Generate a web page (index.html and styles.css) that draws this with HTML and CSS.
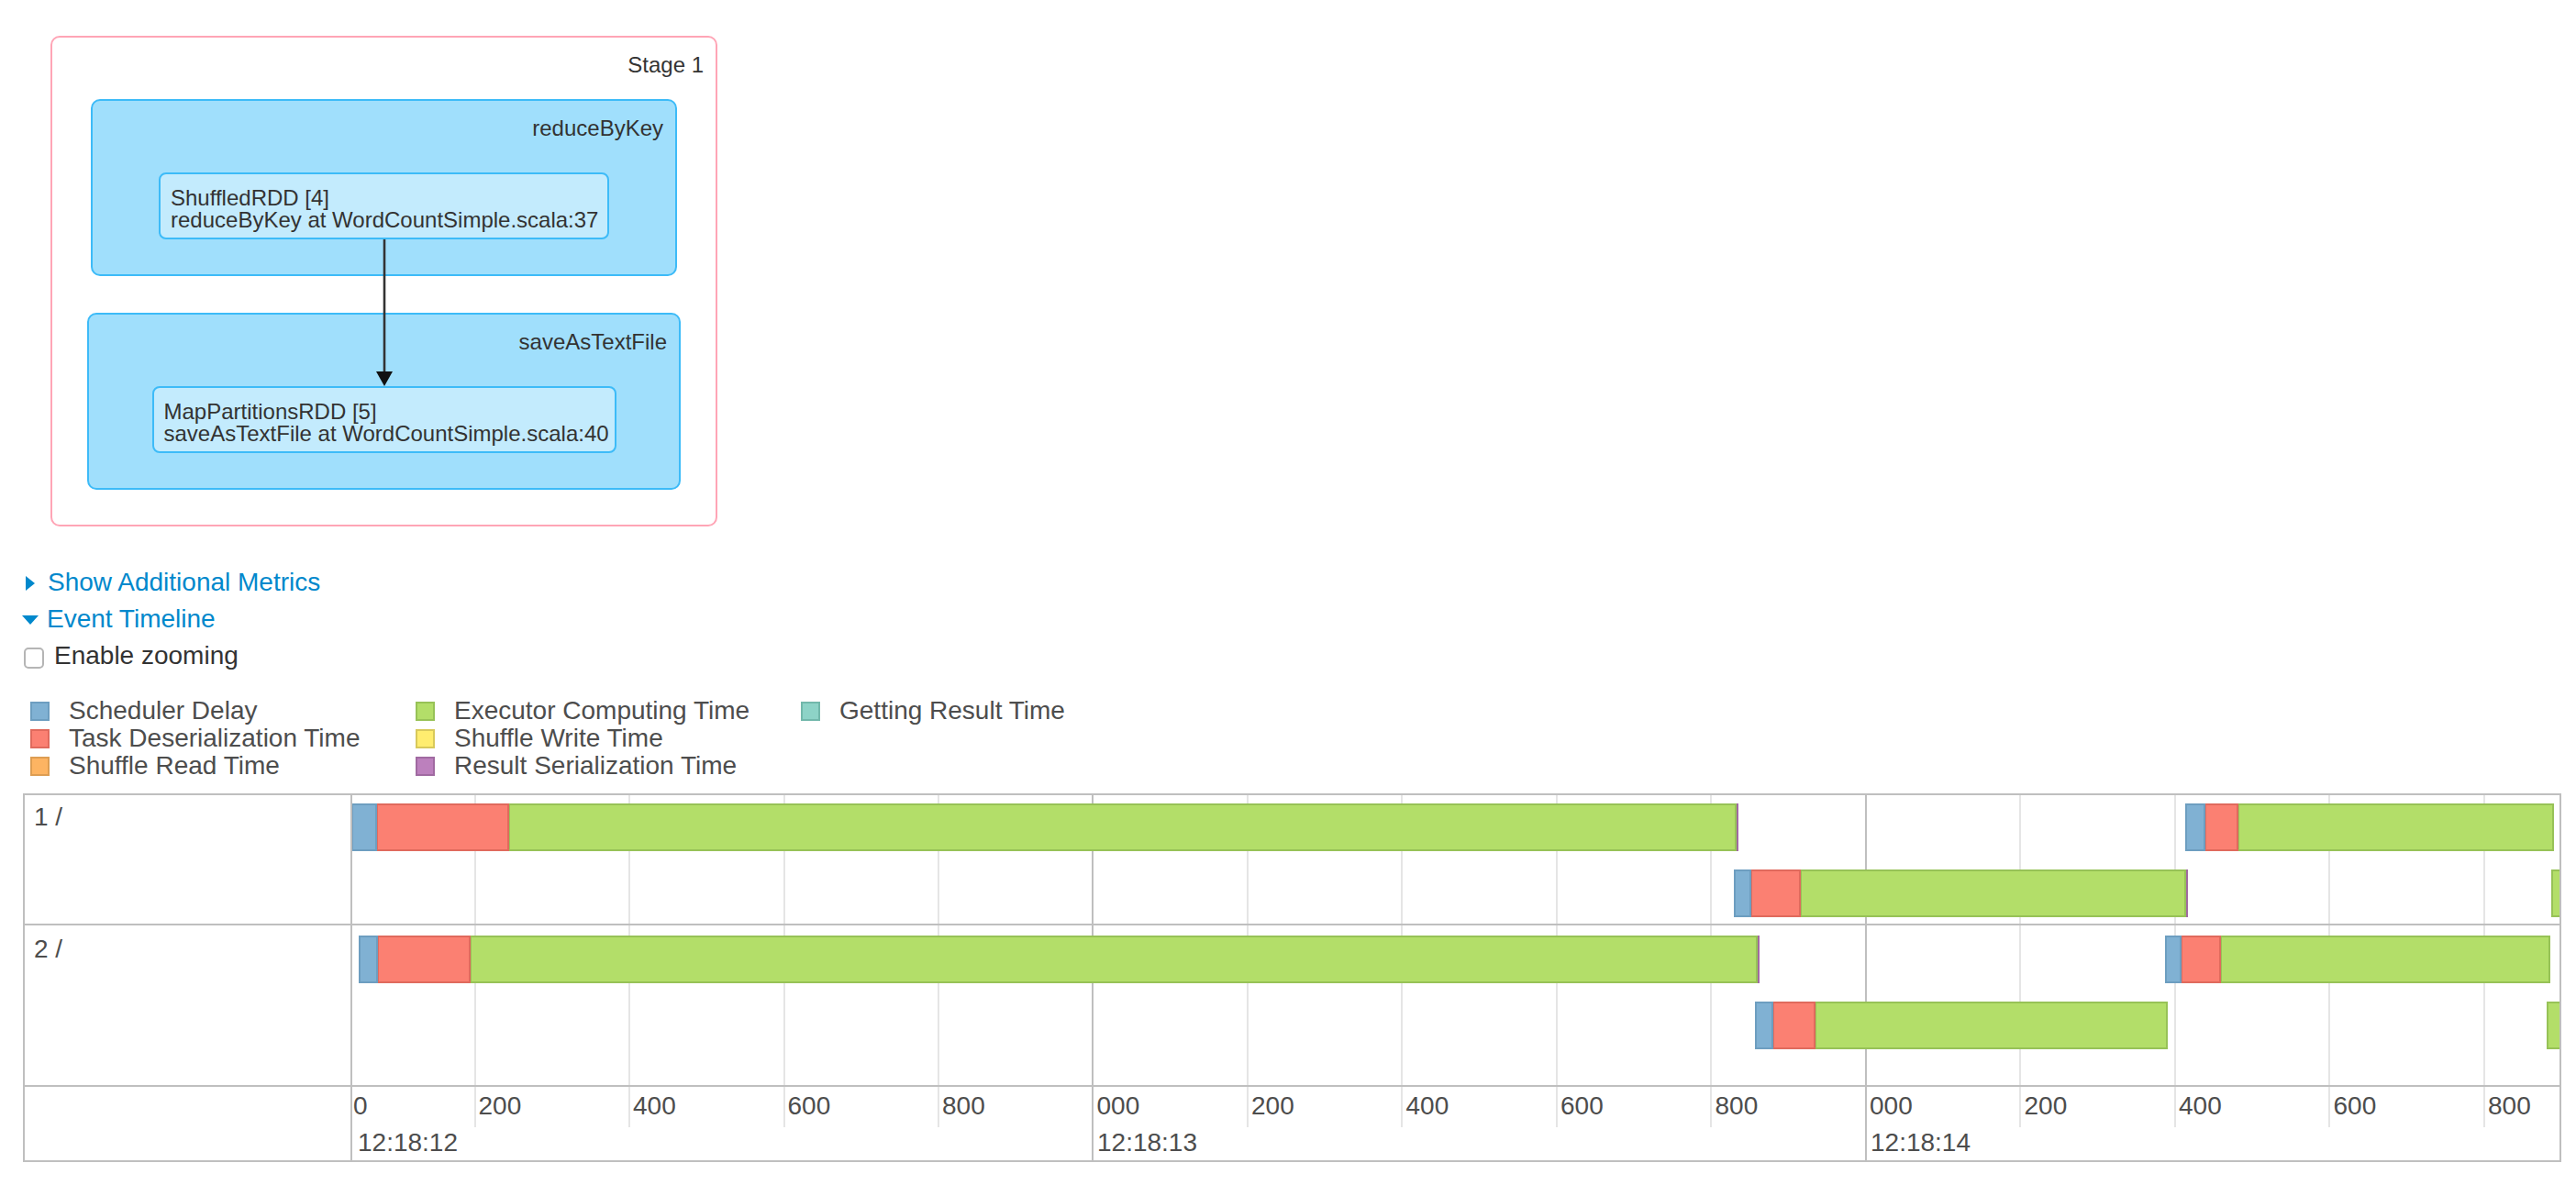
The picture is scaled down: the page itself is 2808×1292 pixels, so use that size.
FILE: index.html
```html
<!DOCTYPE html>
<html>
<head>
<meta charset="utf-8">
<title>Stage 1</title>
<link rel="stylesheet" href="styles.css">
</head>
<body>
<div class="page">
  <div class="stage">
    <div class="stage-title">Stage 1</div>
    <div class="cluster cluster-a">
      <div class="cluster-label">reduceByKey</div>
      <div class="node node-a">ShuffledRDD [4]<br>reduceByKey at WordCountSimple.scala:37</div>
    </div>
    <div class="cluster cluster-b">
      <div class="cluster-label">saveAsTextFile</div>
      <div class="node node-b">MapPartitionsRDD [5]<br>saveAsTextFile at WordCountSimple.scala:40</div>
    </div>
    <svg class="edge" width="20" height="161" viewBox="0 0 20 161">
      <line x1="10" y1="0" x2="10" y2="146" stroke="#333" stroke-width="2.6"/>
      <polygon points="1,144 19,144 10,160" fill="#111"/>
    </svg>
  </div>

  <div class="toggles">
    <div class="toggle"><span class="tri-right"></span><span>Show Additional Metrics</span></div>
    <div class="toggle"><span class="tri-down"></span><span>Event Timeline</span></div>
    <div class="check-row"><span class="checkbox"></span><span>Enable zooming</span></div>
  </div>

  <div class="legend">
    <div class="legend-item"><span class="sw sd"></span>Scheduler Delay</div>
    <div class="legend-item"><span class="sw td"></span>Task Deserialization Time</div>
    <div class="legend-item"><span class="sw sr"></span>Shuffle Read Time</div>
    <div class="legend-item"><span class="sw ec"></span>Executor Computing Time</div>
    <div class="legend-item"><span class="sw sw-w"></span>Shuffle Write Time</div>
    <div class="legend-item"><span class="sw rs"></span>Result Serialization Time</div>
    <div class="legend-item"><span class="sw gr"></span>Getting Result Time</div>
  </div>

  <div class="timeline">
    <div class="tl-label tl-label-1">1 /</div>
    <div class="tl-label tl-label-2">2 /</div>
    <div class="tl-label tl-label-axis"></div>

    <div class="tl-grid">
      <div class="gl" style="left:132.5px"></div>
      <div class="gl" style="left:301px"></div>
      <div class="gl" style="left:469.5px"></div>
      <div class="gl" style="left:638px"></div>
      <div class="gl major" style="left:806px"></div>
      <div class="gl" style="left:974.5px"></div>
      <div class="gl" style="left:1143px"></div>
      <div class="gl" style="left:1311.5px"></div>
      <div class="gl" style="left:1480px"></div>
      <div class="gl major" style="left:1648.5px"></div>
      <div class="gl" style="left:1817px"></div>
      <div class="gl" style="left:1985.5px"></div>
      <div class="gl" style="left:2154px"></div>
      <div class="gl" style="left:2322.5px"></div>
    </div>

    <div class="tl-row tl-row-1">
      <div class="bar" style="left:-1px;top:9px"><div class="seg sd" style="width:28px"></div><div class="seg td" style="width:144px"></div><div class="seg ec" style="width:1338px"></div><div class="seg rs" style="width:2px"></div></div>
      <div class="bar" style="left:1998px;top:9px"><div class="seg sd" style="width:22px"></div><div class="seg td" style="width:36px"></div><div class="seg ec" style="width:344px"></div></div>
      <div class="bar" style="left:1506px;top:81px"><div class="seg sd" style="width:19px"></div><div class="seg td" style="width:54px"></div><div class="seg ec" style="width:420px"></div><div class="seg rs" style="width:2px"></div></div>
      <div class="bar" style="left:2397px;top:81px"><div class="seg ec" style="width:40px"></div></div>
    </div>

    <div class="tl-row tl-row-2">
      <div class="bar" style="left:7px;top:11px"><div class="seg sd" style="width:21px"></div><div class="seg td" style="width:101px"></div><div class="seg ec" style="width:1403px"></div><div class="seg rs" style="width:2px"></div></div>
      <div class="bar" style="left:1976px;top:11px"><div class="seg sd" style="width:18px"></div><div class="seg td" style="width:43px"></div><div class="seg ec" style="width:359px"></div></div>
      <div class="bar" style="left:1529px;top:83px"><div class="seg sd" style="width:20px"></div><div class="seg td" style="width:46px"></div><div class="seg ec" style="width:384px"></div></div>
      <div class="bar" style="left:2392px;top:83px"><div class="seg ec" style="width:40px"></div></div>
    </div>

    <div class="tl-axis">
      <span class="minor-lbl" style="left:1px">0</span>
      <span class="minor-lbl" style="left:137.5px">200</span>
      <span class="minor-lbl" style="left:306px">400</span>
      <span class="minor-lbl" style="left:474.5px">600</span>
      <span class="minor-lbl" style="left:643px">800</span>
      <span class="minor-lbl" style="left:811.5px">000</span>
      <span class="minor-lbl" style="left:980px">200</span>
      <span class="minor-lbl" style="left:1148.5px">400</span>
      <span class="minor-lbl" style="left:1317px">600</span>
      <span class="minor-lbl" style="left:1485.5px">800</span>
      <span class="minor-lbl" style="left:1654px">000</span>
      <span class="minor-lbl" style="left:1822.5px">200</span>
      <span class="minor-lbl" style="left:1991px">400</span>
      <span class="minor-lbl" style="left:2159.5px">600</span>
      <span class="minor-lbl" style="left:2328px">800</span>
      <span class="major-lbl" style="left:6px">12:18:12</span>
      <span class="major-lbl" style="left:812px">12:18:13</span>
      <span class="major-lbl" style="left:1655px">12:18:14</span>
    </div>
  </div>
</div>
</body>
</html>
```

FILE: styles.css
```css
html, body {
  margin: 0;
  padding: 0;
  background: #fff;
}

body {
  font-family: "Liberation Sans", Arial, Helvetica, sans-serif;
  font-size: 28px;
  color: #333;
}

.page {
  padding-top: 39px;
  width: 2808px;
}

/* ---------- DAG ---------- */
.stage {
  position: relative;
  margin-left: 55px;
  width: 727px;
  height: 535px;
  box-sizing: border-box;
  border: 2px solid #ffa5b6;
  border-radius: 10px;
  display: flex;
  flex-direction: column;
  align-items: center;
  font-size: 24px;
  color: #333;
}

.stage-title {
  align-self: flex-end;
  margin: 16px 13px 0 0;
  line-height: 28px;
}

.cluster {
  box-sizing: border-box;
  height: 193px;
  border: 2px solid #3dbbf8;
  border-radius: 10px;
  background: #a0dffc;
  display: flex;
  flex-direction: column;
  align-items: center;
}

.cluster-a {
  width: 639px;
  margin-top: 23px;
}

.cluster-b {
  width: 647px;
  margin-top: 40px;
}

.cluster-label {
  align-self: flex-end;
  margin: 16px 13px 0 0;
  line-height: 28px;
}

.node {
  box-sizing: border-box;
  height: 73px;
  margin-top: 34px;
  padding: 14px 10px 0 11px;
  border: 2px solid #3dbbf8;
  border-radius: 8px;
  background: #c3ebfd;
  line-height: 23.5px;
  white-space: nowrap;
}

.node-a { width: 491px; }
.node-b { width: 506px; }

.edge {
  position: absolute;
  left: 351.5px;
  top: 220px;
}

/* ---------- toggles ---------- */
.toggles {
  margin-top: 41px;
}

.toggle {
  display: flex;
  align-items: center;
  height: 40px;
  color: #0088cc;
}

.tri-right {
  width: 0;
  height: 0;
  border-top: 8.5px solid transparent;
  border-bottom: 8.5px solid transparent;
  border-left: 10px solid #0088cc;
  margin: 2px 14px 0 28px;
}

.tri-down {
  width: 0;
  height: 0;
  border-left: 9.5px solid transparent;
  border-right: 9.5px solid transparent;
  border-top: 10px solid #0088cc;
  margin: 2px 9px 0 24px;
}

.check-row {
  display: flex;
  align-items: center;
  height: 40px;
  color: #333;
}

.checkbox {
  box-sizing: border-box;
  width: 22px;
  height: 23px;
  margin: 4px 11px 0 26px;
  border: 2px solid #b5b5b5;
  border-radius: 5px;
  background: #fff;
}

/* ---------- legend ---------- */
.legend {
  margin: 25px 0 0 33px;
  display: grid;
  grid-auto-flow: column;
  grid-template-rows: repeat(3, 30px);
  grid-template-columns: repeat(3, 420px);
  color: #4d4d4d;
  line-height: 30px;
}

.legend-item {
  display: flex;
  align-items: center;
  white-space: nowrap;
}

.sw {
  box-sizing: border-box;
  width: 21px;
  height: 21px;
  margin-right: 21px;
  border-width: 2px;
  border-style: solid;
}

/* ---------- timeline ---------- */
.timeline {
  position: relative;
  margin: 15px 0 0 25px;
  width: 2767px;
  box-sizing: border-box;
  border: 2px solid #bfbfbf;
  display: grid;
  grid-template-columns: 357px 1fr;
  grid-template-rows: 142px 176px 80px;
  color: #4d4d4d;
}

.tl-label {
  box-sizing: border-box;
  grid-column: 1;
  border-right: 2px solid #bfbfbf;
  border-bottom: 2px solid #bfbfbf;
  padding-left: 10px;
  line-height: 32px;
}

.tl-label-1 { grid-row: 1; padding-top: 8px; }
.tl-label-2 { grid-row: 2; padding-top: 10px; }
.tl-label-axis { grid-row: 3; border-bottom: 0; }

.tl-grid {
  position: absolute;
  left: 357px;
  top: 0;
  right: 0;
  bottom: 0;
  overflow: hidden;
}

.gl {
  position: absolute;
  top: 0;
  bottom: 36px;
  width: 2px;
  background: #e5e5e5;
}

.gl.major {
  bottom: 0;
  background: #bfbfbf;
}

.tl-row {
  position: relative;
  grid-column: 2;
  box-sizing: border-box;
  border-bottom: 2px solid #bfbfbf;
  overflow: hidden;
}

.tl-row-1 { grid-row: 1; }
.tl-row-2 { grid-row: 2; }

.bar {
  position: absolute;
  height: 52px;
  display: flex;
  z-index: 1;
}

.seg {
  box-sizing: border-box;
  height: 100%;
  flex: none;
  border-width: 2px;
  border-style: solid;
}

.seg + .seg { border-left-width: 1px; }

/* task phase colours */
.sd { background: #80b1d3; border-color: #6d9ec0; }
.td { background: #fb8072; border-color: #e06a5d; }
.sr { background: #fdb462; border-color: #dd9d52; }
.ec { background: #b3de69; border-color: #97c257; }
.sw-w { background: #ffed6f; border-color: #d8c95b; }
.rs { background: #bc80bd; border-color: #a06aa1; }
.gr { background: #8dd3c7; border-color: #72b8ab; }

.seg.rs {
  border-width: 0;
  background: #a06aa1;
}

.tl-axis {
  position: relative;
  grid-column: 2;
  grid-row: 3;
  overflow: hidden;
  line-height: 32px;
}

.minor-lbl,
.major-lbl {
  position: absolute;
  white-space: nowrap;
}

.minor-lbl { top: 5px; }
.major-lbl { top: 45px; }
```
